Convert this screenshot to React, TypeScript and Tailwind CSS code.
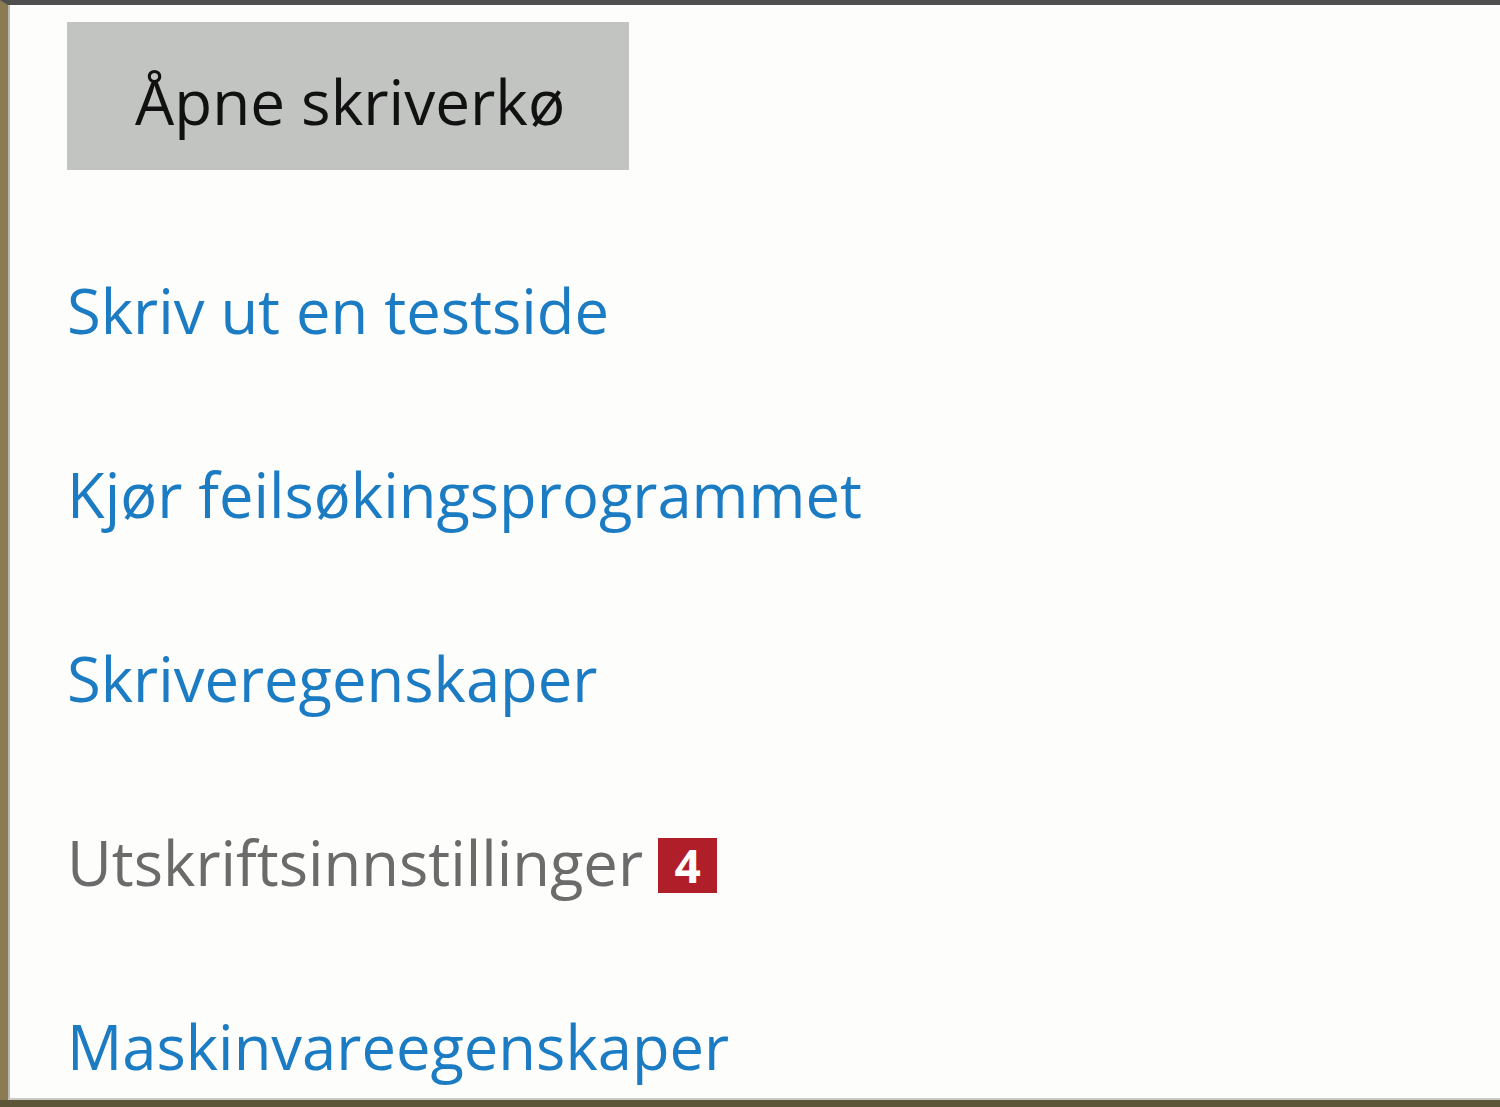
const links = [
  { label: 'Skriv ut en testside', muted: false },
  { label: 'Kjør feilsøkingsprogrammet', muted: false },
  { label: 'Skriveregenskaper', muted: false },
  { label: 'Utskriftsinnstillinger', muted: true, badge: '4' },
  { label: 'Maskinvareegenskaper', muted: false },
];

export default function App() {
  return (
    <div
      className="h-[1107px] w-[1500px] overflow-hidden bg-[#5d5538] pb-[7px]"
      style={{ fontFamily: '"Open Sans", "Noto Sans", sans-serif' }}
    >
      <div className="flex h-full flex-col border-t-[5px] border-l-[8px] border-t-[#4f4f4f] border-l-[#8a7b52] bg-[#fdfdfc]">
        <div className="flex h-full flex-col border-l-[2px] border-b-[2px] border-l-[#b9b9b4] border-b-[#c9c9c6] pl-[57px]">
          <button className="mt-[17px] flex h-[148px] w-[562px] items-center bg-[#c2c4c1] pl-[68px] pt-[10px] text-left text-[62px] leading-[80px] text-[#111]">
            Åpne skriverkø
          </button>

          <div className="mt-[100px] flex flex-col gap-[104px]">
            {links.map((link) => (
              <div key={link.label} className="flex items-center">
                <span
                  className={`text-[61.5px] leading-[80px] ${
                    link.muted ? 'text-[#6b6b6b]' : 'text-[#1b7bc3]'
                  }`}
                >
                  {link.label}
                </span>
                {link.badge && (
                  <span className="ml-[15px] mt-[6px] flex h-[55px] w-[59px] items-center justify-center bg-[#b01f29] text-[46px] font-bold leading-none text-white">
                    {link.badge}
                  </span>
                )}
              </div>
            ))}
          </div>
        </div>
      </div>
    </div>
  );
}
